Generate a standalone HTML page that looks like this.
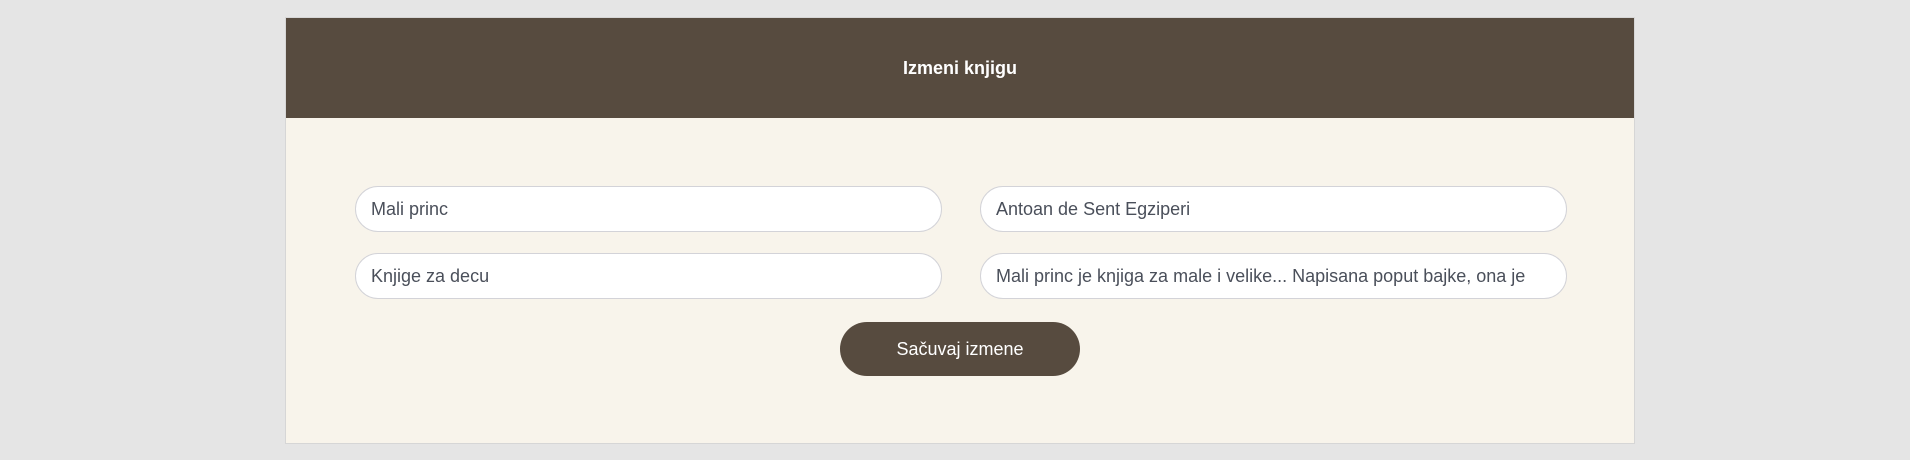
<!DOCTYPE html>
<html><head><meta charset="utf-8"><style>
html,body{margin:0;padding:0;background:#e5e5e5;width:1910px;height:460px;overflow:hidden;font-family:"Liberation Sans",sans-serif}
.card{position:absolute;left:285px;top:17px;width:1350px;height:427px;background:#f8f4eb;border:1px solid #d6d6d6;box-sizing:border-box}
.hdr{position:absolute;left:0;top:0;width:100%;height:100px;background:#574b3f;color:#fff;font-weight:bold;font-size:18px;text-align:center;line-height:100px}
.in{position:absolute;height:46px;background:#fff;border:1px solid #d3d3d8;border-radius:23px;box-sizing:border-box;padding-left:15px;line-height:44px;font-size:18px;color:#4a4f5a;white-space:nowrap;overflow:hidden;width:587px}
.btn{position:absolute;left:554px;top:304px;width:240px;height:54px;border-radius:27px;background:#574b3f;color:#fff;font-size:18px;text-align:center;line-height:54px}
</style></head><body>
<div class="card">
<div class="hdr">Izmeni knjigu</div>
<div class="in" style="left:69px;top:168px">Mali princ</div>
<div class="in" style="left:694px;top:168px">Antoan de Sent Egziperi</div>
<div class="in" style="left:69px;top:235px">Knjige za decu</div>
<div class="in" style="left:694px;top:235px">Mali princ je knjiga za male i velike... Napisana poput bajke, ona je</div>
<div class="btn">Sačuvaj izmene</div>
</div>
</body></html>
